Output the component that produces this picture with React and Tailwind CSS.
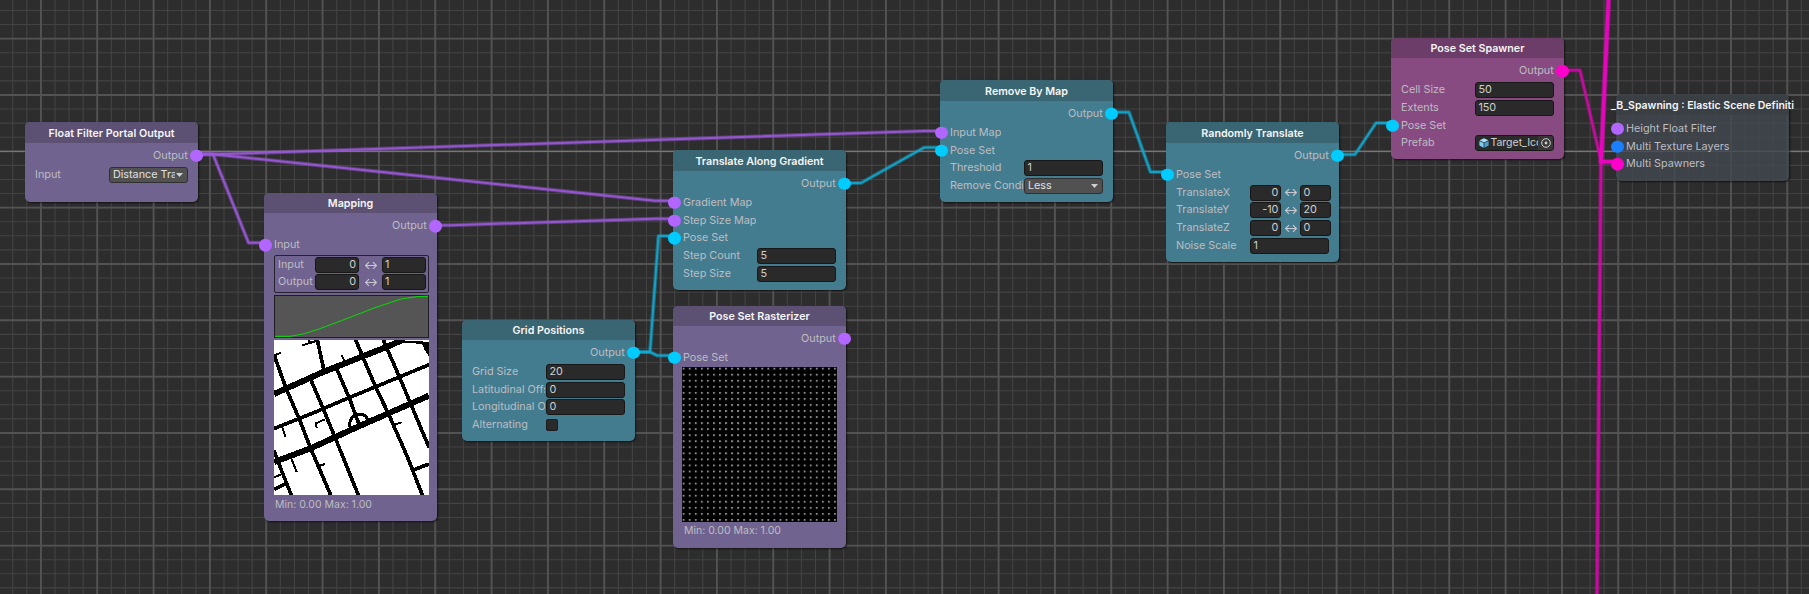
const themes = {
  purple: { body: 'bg-[#70638f]', head: 'bg-[#5c5073]' },
  teal: { body: 'bg-[#447c8f]', head: 'bg-[#3a6674]' },
  magenta: { body: 'bg-[#874b82]', head: 'bg-[#6c3d68]' },
  slate: { body: 'bg-[#424850]/80', head: 'bg-[#393e43]/80' },
};

const portColors = {
  purple: 'bg-[#b266ff]',
  cyan: 'bg-[#00ccff]',
  pink: 'bg-[#ff00cc]',
  blue: 'bg-[#1a80ff]',
};

function Node({ x, y, w = 173, h, theme, title, children }) {
  const t = themes[theme];
  return (
    <section className="absolute" style={{ left: x, top: y, width: w, height: h }}>
      <div className={`flex h-full flex-col rounded-[5px] shadow-[1px_1px_2px_rgba(0,0,0,0.6)] ${t.body}`}>
        <h2 className={`flex h-[20.5px] shrink-0 items-center justify-center whitespace-nowrap rounded-t-[5px] pt-[2.6px] font-semibold text-[#f5f5f5] ${theme === 'slate' ? 'text-[10.5px]' : 'text-[10.7px]'} ${t.head}`}>
          {title}
        </h2>
        {children}
      </div>
    </section>
  );
}

function Port({ color, side }) {
  return (
    <i className={`absolute top-1/2 size-[12.5px] -translate-y-1/2 rounded-full ${side === 'left' ? '-left-[5px]' : '-right-[4.5px]'} ${portColors[color]}`} />
  );
}

function Output({ color }) {
  return (
    <div className="relative mt-[4.1px] mb-[1.2px] flex h-[17.8px] shrink-0 items-center justify-end pr-[10.3px]">
      Output
      <Port color={color} side="right" />
    </div>
  );
}

function Row({ label, port, children }) {
  return (
    <div className="relative flex h-[17.75px] shrink-0 items-center pr-[9px] pl-[10px]">
      {port && <Port color={port} side="left" />}
      <span className={`overflow-hidden whitespace-nowrap ${children ? 'w-[73px] mr-[1.4px] shrink-0' : ''}`}>{label}</span>
      {children}
    </div>
  );
}

const box = 'flex h-[16px] items-center overflow-hidden whitespace-nowrap rounded-[3px] border border-[#171717] bg-[#2a2a2a] px-[2px] text-[#d0d0d0]';

function Field({ value }) {
  return <div className={`${box} w-[79px]`}>{value}</div>;
}

function Select({ value }) {
  return (
    <div className="flex h-[16px] w-[79px] items-center rounded-[3px] border border-[#303030] bg-[#515151] pr-[4px] pl-[2.5px] text-[#e0e0e0]">
      <span className="flex-1 overflow-hidden whitespace-nowrap">{value}</span>
      <svg className="ml-[1.5px] h-[4px] w-[7px] shrink-0" viewBox="0 0 7 4"><path d="M0 0H7L3.5 4Z" fill="#d0d0d0" /></svg>
    </div>
  );
}

function Arrow() {
  return (
    <svg className="h-[9px] w-[12px] shrink-0" viewBox="0 0 12 9" fill="none" stroke="#c8c8d0" strokeWidth="1.15">
      <path d="M.6 4.5H11.4M4 1.1L.6 4.5L4 7.9M8 1.1L11.4 4.5L8 7.9" />
    </svg>
  );
}

function Range({ from, to, wide }) {
  const size = wide ? 'w-[44px]' : 'w-[31px]';
  return (
    <div className={`flex shrink-0 items-center ${wide ? 'gap-[5.5px]' : 'gap-[3.5px]'}`}>
      <div className={`${box} ${size} justify-end`}>{from}</div>
      <Arrow />
      <div className={`${box} ${size}`}>{to}</div>
    </div>
  );
}

function Streets() {
  return (
    <svg className="ml-[10px] mt-[2px] size-[155px] shrink-0 bg-white" viewBox="0 0 465 465" fill="none" stroke="#000" shapeRendering="crispEdges">
      <g strokeWidth="18">
        <path d="M0 162L150 95L340 20L390 -2" />
        <path d="M0 366L110 325L250 261L350 217L465 167" />
      </g>
      <path d="M335 20L375 4L420 2L465 6V50L452 30L446 14L410 8L372 10L338 28Z" fill="#000" stroke="none" />
      <g strokeWidth="11">
        <path d="M0 266L120 218L225 173L330 130L465 74" />
        <path d="M0 44L35 142L75 235L110 325L170 465" />
        <path d="M130 0L150 92" />
        <path d="M110 118L150 212L183 292L253 465" />
        <path d="M188 86L228 180L254 250" />
        <path d="M245 0L300 130L345 225L400 350L445 465" />
        <path d="M328 0L375 108L420 215L465 322" />
        <path d="M0 332L18 380L52 465" />
        <path d="M415 391L465 372" />
        <path d="M0 448L34 432" />
      </g>
      <g strokeWidth="6">
        <path d="M85 16L130 2M104 0L108 8" />
        <path d="M0 47L20 38" />
        <path d="M203 46L212 64" />
        <path d="M25 262L34 290" />
        <path d="M152 238L126 250L128 263" />
        <path d="M52 355L68 396" />
        <path d="M130 380L153 372" />
        <path d="M360 255L383 247" />
        <path d="M0 412L20 404" />
      </g>
      <path d="M228 262Q224 238 240 228Q256 220 272 226L284 240" strokeWidth="9" />
    </svg>
  );
}

function Dots() {
  return (
    <svg className="ml-[9px] mt-[.5px] size-[155px] shrink-0 bg-black" viewBox="0 0 155 155">
      <defs>
        <pattern id="dots" x="0.7" y="0.7" width="6.05" height="6.05" patternUnits="userSpaceOnUse">
          <rect width="1.9" height="1.9" fill="#8c8c8c" />
        </pattern>
      </defs>
      <rect width="155" height="155" fill="url(#dots)" />
    </svg>
  );
}

function Grid() {
  const step = 56.335;
  const lines = (start, count, gap) => Array.from({ length: count }, (_, i) => start + i * gap);
  return (
    <g>
      <g stroke="#434343" strokeWidth="1.1">
        {lines(40.9 - step, 134, step / 4).map((x) => <path key={x} d={`M${x} 0V594`} />)}
        {lines(38.6 - step, 46, step / 4).map((y) => <path key={y} d={`M0 ${y}H1809`} />)}
      </g>
      <g stroke="#535353" strokeWidth="1.9">
        {lines(40.9, 33, step).map((x) => <path key={x} d={`M${x} 0V594`} />)}
        {lines(38.6, 11, step).map((y) => <path key={y} d={`M0 ${y}H1809`} />)}
      </g>
      <path d="M0 151.5H1809" stroke="#767676" />
    </g>
  );
}

const edges = [
  { color: '#9a59d8', d: 'M197 154.3H213L925 131H942' },
  { color: '#9a59d8', d: 'M197 154.3H213L655 200.7H674' },
  { color: '#9a59d8', d: 'M197 154.3H213L248.5 242.7H266' },
  { color: '#9a59d8', d: 'M435 225.2H452L655 218.7H674' },
  { color: '#14a6cc', d: 'M633 352H650L658.5 236H674' },
  { color: '#14a6cc', d: 'M633 352H650L657 355.5H674' },
  { color: '#14a6cc', d: 'M844 183H861L924 147.6H942' },
  { color: '#14a6cc', d: 'M1111 112.3H1129L1150.5 172H1168' },
  { color: '#14a6cc', d: 'M1337 154.5H1355L1376 123H1393' },
  { color: '#d00aa9', d: 'M1562 70.3H1580L1601 161' },
  { color: '#d00aa9', d: 'M1601 161L1597 594', width: 2.6 },
  { color: '#ee04c2', d: 'M1608.5 0L1601 161.7H1618', width: 3.6 },
];

function Edges() {
  return (
    <g fill="none" strokeLinejoin="round">
      {edges.map(({ color, d, width = 2 }) => (
        <g key={d} stroke={color}>
          <path d={d} strokeWidth={width + 2} strokeOpacity=".45" />
          <path d={d} strokeWidth={width} strokeOpacity=".9" />
        </g>
      ))}
    </g>
  );
}

export default function App() {
  return (
    <main className="relative h-[594px] w-[1809px] overflow-hidden bg-[#2d2d2d] font-['Inter',sans-serif] text-[10.8px] leading-[14px] text-[#bdbdc2]">
      <svg className="absolute inset-0" width="1809" height="594">
        <Grid />
        <Edges />
      </svg>

      <Node x={25} y={122.3} h={79.3} theme="purple" title="Float Filter Portal Output">
        <Output color="purple" />
        <Row label="Input"><Select value="Distance Transform" /></Row>
      </Node>

      <Node x={264} y={192.7} h={328} theme="purple" title="Mapping">
        <Output color="purple" />
        <Row label="Input" port="purple" />
        <div className="ml-[10px] mt-[.6px] flex h-[38.5px] w-[155px] shrink-0 flex-col justify-center gap-px rounded-[2px] border border-[#25222e] pl-[3px]">
          {['Input', 'Output'].map((name) => (
            <div key={name} className="flex items-center">
              <span className="w-[37px] shrink-0">{name}</span>
              <Range from="0" to="1" wide />
            </div>
          ))}
        </div>
        <svg className="mt-[2px] ml-[10px] h-[43px] w-[155px] shrink-0" viewBox="0 0 155 43">
          <rect x=".5" y=".5" width="154" height="42" fill="#555" stroke="#1f1f1f" />
          <path d="M1 41.3H16L29 39L45 34L77 22L100 13L127 4L143 1.7L154 1.3" fill="none" stroke="#0fce0f" strokeWidth="1.2" />
        </svg>
        <Streets />
        <p className="ml-[11px] mt-[2.5px] text-[10.5px]">Min: 0.00 Max: 1.00</p>
      </Node>

      <Node x={462} y={319.5} h={121.3} theme="teal" title="Grid Positions">
        <Output color="cyan" />
        <Row label="Grid Size"><Field value="20" /></Row>
        <Row label="Latitudinal Offset"><Field value="0" /></Row>
        <Row label="Longitudinal Offset"><Field value="0" /></Row>
        <Row label="Alternating"><div className="size-[12px] rounded-[2px] border border-[#1b1b1b] bg-[#2a2a2a]" /></Row>
      </Node>

      <Node x={673} y={150.3} h={139.3} theme="teal" title="Translate Along Gradient">
        <Output color="cyan" />
        <Row label="Gradient Map" port="purple" />
        <Row label="Step Size Map" port="purple" />
        <Row label="Pose Set" port="cyan" />
        <Row label="Step Count"><Field value="5" /></Row>
        <Row label="Step Size"><Field value="5" /></Row>
      </Node>

      <Node x={673} y={305.5} h={242.4} theme="purple" title="Pose Set Rasterizer">
        <Output color="purple" />
        <Row label="Pose Set" port="cyan" />
        <Dots />
        <p className="ml-[11px] mt-[1.5px] text-[10.5px]">Min: 0.00 Max: 1.00</p>
      </Node>

      <Node x={940} y={80.3} h={121.3} theme="teal" title="Remove By Map">
        <Output color="cyan" />
        <Row label="Input Map" port="purple" />
        <Row label="Pose Set" port="cyan" />
        <Row label="Threshold"><Field value="1" /></Row>
        <Row label="Remove Condition"><Select value="Less" /></Row>
      </Node>

      <Node x={1166} y={122.3} h={139.3} theme="teal" title="Randomly Translate">
        <Output color="cyan" />
        <Row label="Pose Set" port="cyan" />
        <Row label="TranslateX"><Range from="0" to="0" /></Row>
        <Row label="TranslateY"><Range from="-10" to="20" /></Row>
        <Row label="TranslateZ"><Range from="0" to="0" /></Row>
        <Row label="Noise Scale"><Field value="1" /></Row>
      </Node>

      <Node x={1391} y={37.6} h={121} theme="magenta" title="Pose Set Spawner">
        <Output color="pink" />
        <Row label="Cell Size"><Field value="50" /></Row>
        <Row label="Extents"><Field value="150" /></Row>
        <Row label="Pose Set" port="cyan" />
        <Row label="Prefab">
          <div className={`${box} w-[79px] pr-0`}>
            <svg className="mr-[1px] ml-[1px] size-[10px] shrink-0" viewBox="0 0 10 10">
              <path d="M5 .3L9.4 2.2L5 4.4L.6 2.2Z" fill="#a8e0fb" />
              <path d="M.4 3L4.6 5V9.8L.4 7.6Z" fill="#7ccdf4" />
              <path d="M9.6 3L5.4 5V9.8L9.6 7.6Z" fill="#4b9fce" />
            </svg>
            <span className="flex-1 overflow-hidden text-[10.5px]">Target_Icon</span>
            <span className="flex h-full w-[15px] shrink-0 items-center justify-center bg-[#373737]">
              <svg className="size-[10px]" viewBox="0 0 10 10"><circle cx="5" cy="5" r="4.3" fill="none" stroke="#d0d0d0" /><circle cx="5" cy="5" r="1.4" fill="#d0d0d0" /></svg>
            </span>
          </div>
        </Row>
      </Node>

      <Node x={1616} y={94.3} h={86.5} theme="slate" title="_B_Spawning : Elastic Scene Definiti">
        <div className="h-[5.2px] shrink-0" />
        <Row label="Height Float Filter" port="purple" />
        <Row label="Multi Texture Layers" port="blue" />
        <Row label="Multi Spawners" port="pink" />
      </Node>
    </main>
  );
}
